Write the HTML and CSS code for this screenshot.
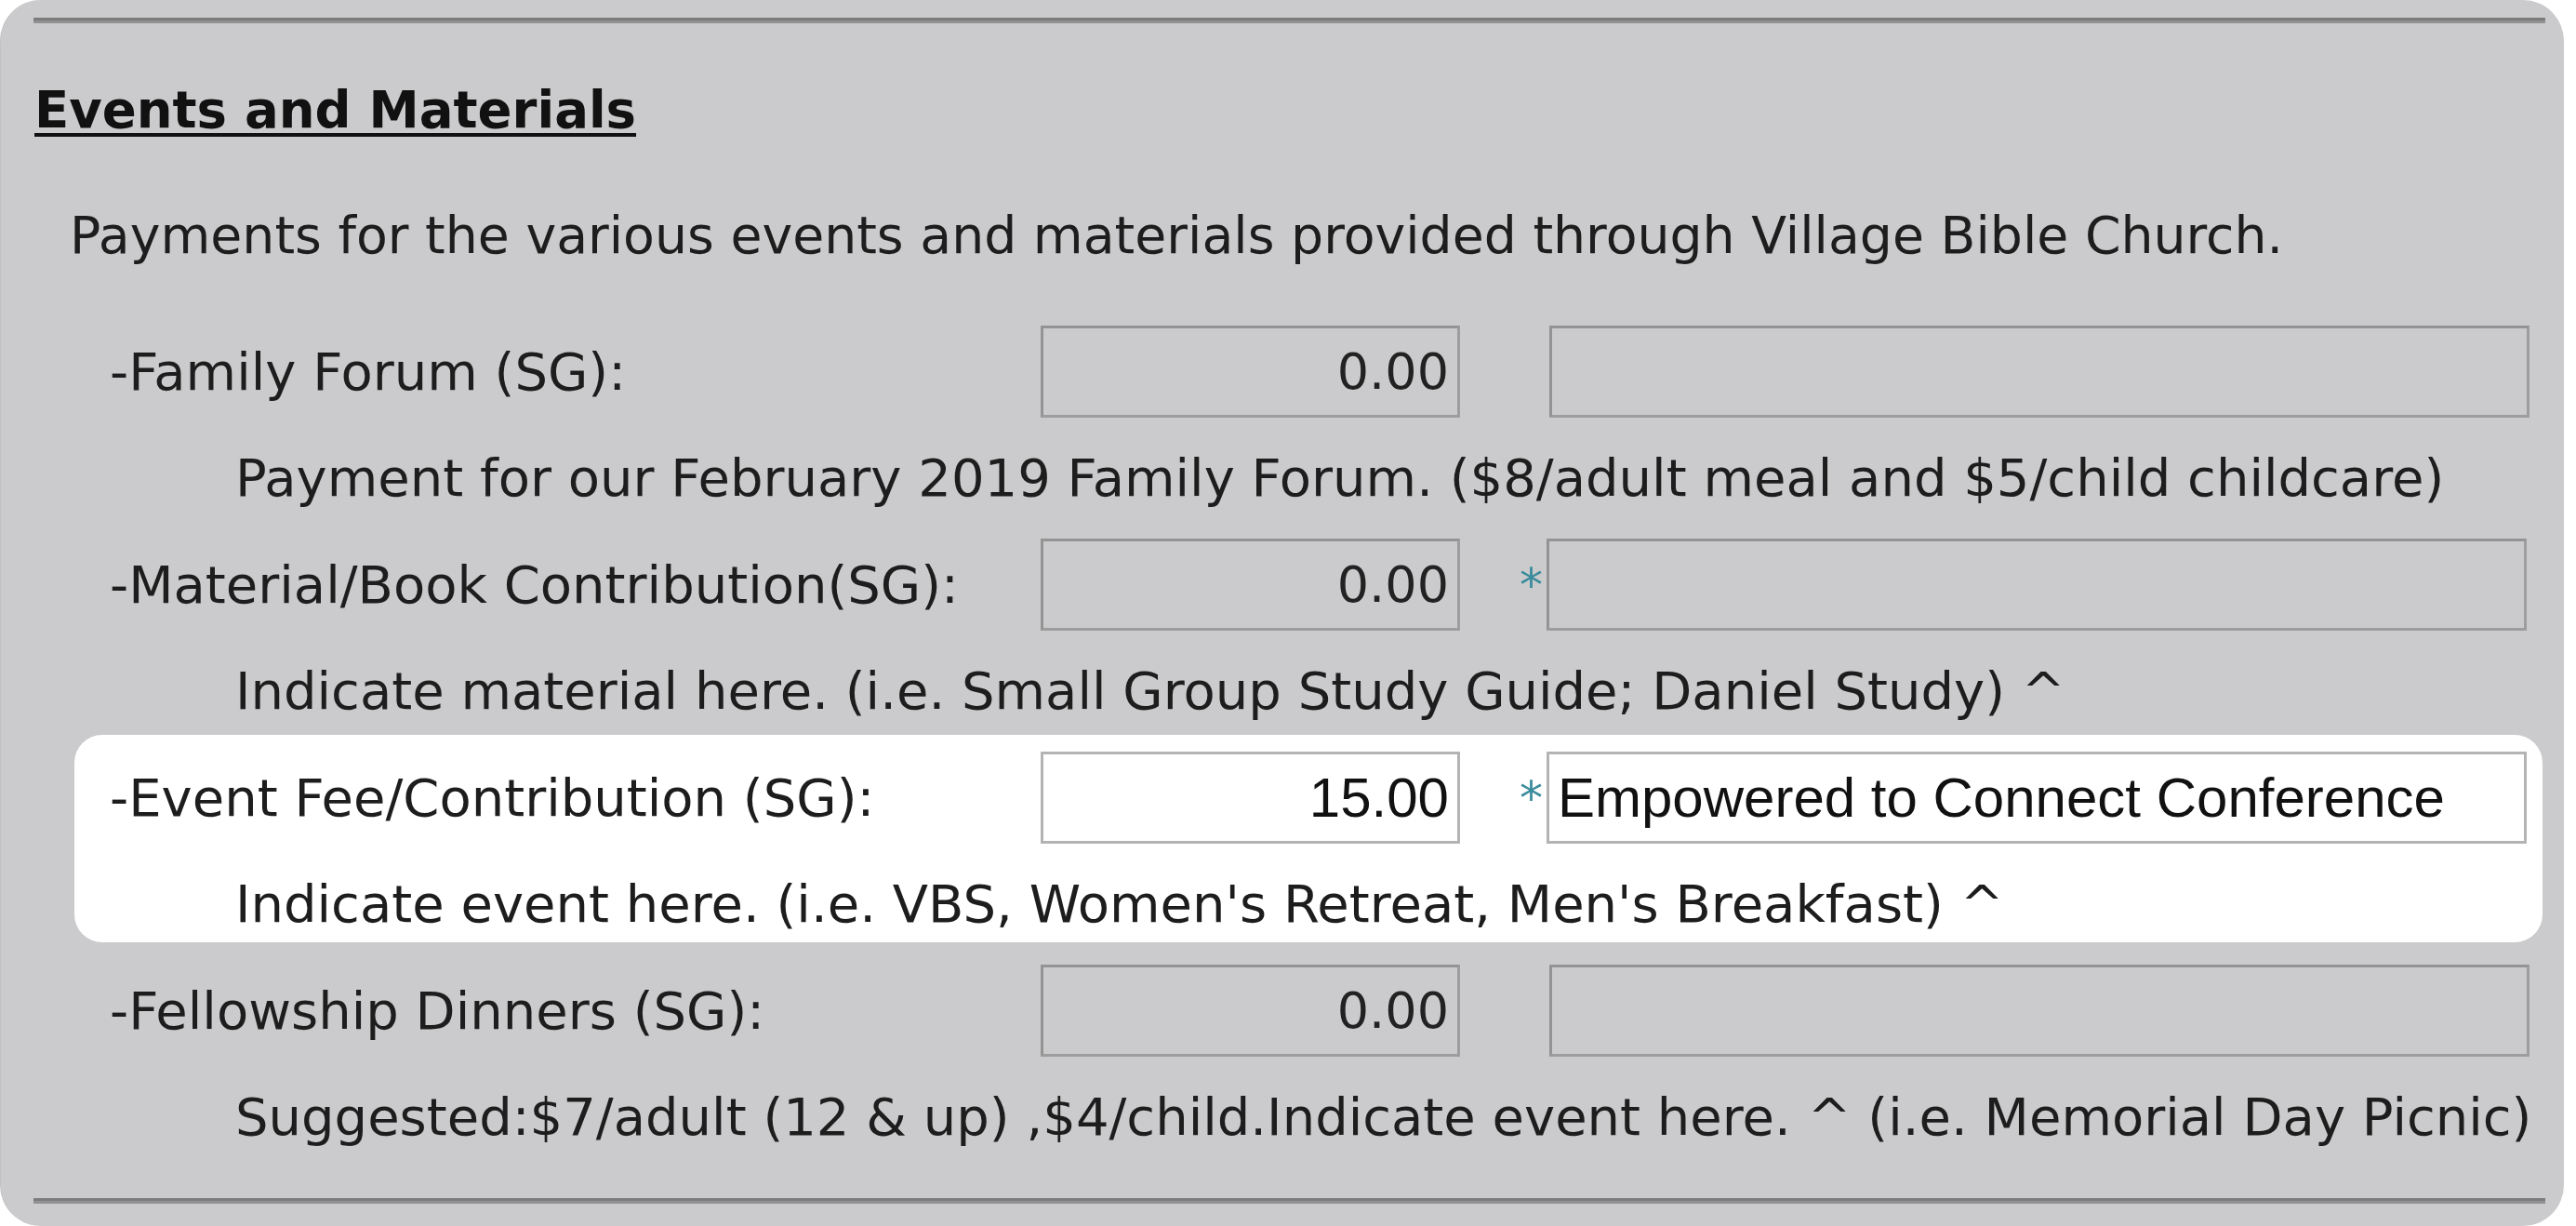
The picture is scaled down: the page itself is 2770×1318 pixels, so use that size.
FILE: index.html
```html
<!DOCTYPE html>
<html lang="en">
<head>
  <meta charset="UTF-8">
  <title>Events and Materials</title>
  <link rel="stylesheet" href="styles.css">
</head>
<body>
  <div class="panel">
    <hr class="rule">
    <h2 class="title">Events and Materials</h2>
    <p class="intro">Payments for the various events and materials provided through Village Bible Church.</p>

    <div class="items">
      <div class="item">
        <div class="line">
          <span class="label">-Family Forum (SG):</span>
          <input class="amount" type="text" value="0.00" disabled>
          <input class="note plain" type="text" value="" disabled>
        </div>
        <div class="desc">Payment for our February 2019 Family Forum. ($8/adult meal and $5/child childcare)</div>
      </div>

      <div class="item">
        <div class="line">
          <span class="label">-Material/Book Contribution(SG):</span>
          <input class="amount" type="text" value="0.00" disabled>
          <span class="req">*</span>
          <input class="note" type="text" value="" disabled>
        </div>
        <div class="desc">Indicate material here. (i.e. Small Group Study Guide; Daniel Study) ^</div>
      </div>

      <div class="item active">
        <div class="line">
          <span class="label">-Event Fee/Contribution (SG):</span>
          <input class="amount" type="text" value="15.00">
          <span class="req">*</span>
          <input class="note" type="text" value="Empowered to Connect Conference">
        </div>
        <div class="desc">Indicate event here. (i.e. VBS, Women's Retreat, Men's Breakfast) ^</div>
      </div>

      <div class="item">
        <div class="line">
          <span class="label">-Fellowship Dinners (SG):</span>
          <input class="amount" type="text" value="0.00" disabled>
          <input class="note plain" type="text" value="" disabled>
        </div>
        <div class="desc">Suggested:$7/adult (12 &amp; up) ,$4/child.Indicate event here. ^ (i.e. Memorial Day Picnic)</div>
      </div>
    </div>

    <hr class="rule bottom">
  </div>
</body>
</html>
```

FILE: styles.css
```css
body {
  margin: 0;
  background: #ffffff;
  font-family: "DejaVu Sans", Verdana, sans-serif;
  color: #1d1d1d;
}
.panel {
  width: 2757px;
  height: 1318px;
  box-sizing: border-box;
  padding-top: 19px;
  background: #cbcbcd;
  border-radius: 44px;
  border-left: 1px solid #c2c2c4;
}
.rule {
  width: 2701px;
  height: 0;
  margin: 0 0 0 35px;
  border: 0;
  border-top: 3px solid #7c7c7c;
  border-bottom: 3px solid #919191;
}
.rule.bottom {
  margin-top: 30px;
}
.title {
  margin: 43px 0 0 36px;
  height: 100px;
  font-size: 54.5px;
  line-height: 100px;
  font-weight: bold;
  color: #111;
  text-decoration: underline;
  text-decoration-thickness: 4px;
  text-underline-offset: 6px;
}
.intro {
  margin: 35px 0 0 74px;
  height: 100px;
  font-size: 55.3px;
  line-height: 100px;
}
.items {
  margin: 39px 0 0 79px;
  width: 2654px;
}
.item {
  height: 229px;
}
.item.active {
  height: 223px;
  box-sizing: border-box;
  margin-top: -10px;
  margin-bottom: 16px;
  padding-top: 10px;
  background: #ffffff;
  border-radius: 30px;
}
.line {
  display: flex;
  align-items: center;
  height: 115px;
  padding-left: 38px;
  font-size: 56px;
}
.label {
  flex: 0 0 1001px;
}
input {
  box-sizing: border-box;
  height: 99px;
  margin: 0;
  border: 3px solid #9d9d9d;
  border-top-color: #939393;
  border-left-color: #939393;
  border-radius: 0;
  background: transparent;
  font-family: "DejaVu Sans", Verdana, sans-serif;
  font-size: 54px;
  color: #222;
  -webkit-text-fill-color: #222;
  outline: none;
}
.amount {
  width: 451px;
  padding: 0 9px 0 0;
  text-align: right;
}
.note {
  width: 1054px;
  padding: 0 0 0 10px;
}
.note.plain {
  margin-left: 96px;
}
.req {
  width: 29px;
  margin-left: 64px;
  font-size: 50px;
  color: #3b8c9c;
}
.active input {
  background: #ffffff;
  border-color: #b4b4b4;
  font-family: "Liberation Sans", Arial, sans-serif;
  font-size: 60px;
  color: #111;
  -webkit-text-fill-color: #111;
}
.active .note {
  padding-left: 9px;
}
.desc {
  height: 114px;
  padding-left: 173px;
  font-size: 56px;
  line-height: 114px;
}
```
